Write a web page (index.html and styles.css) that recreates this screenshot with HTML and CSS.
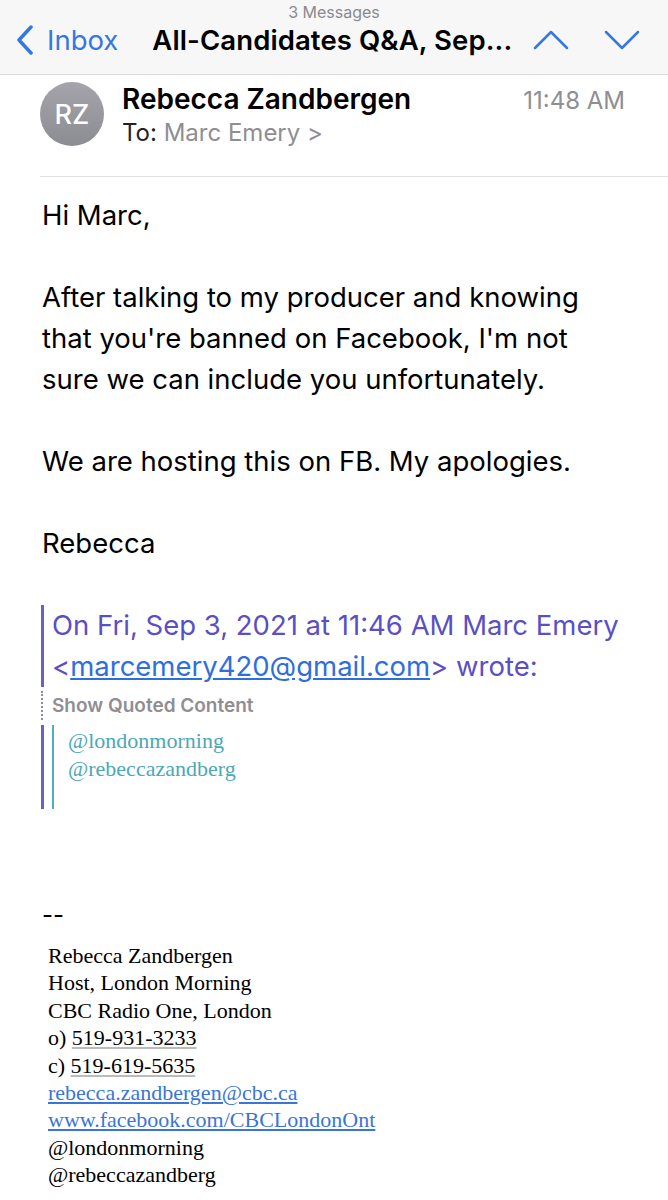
FILE: index.html
```html
<!DOCTYPE html>
<html lang="en">
<head>
    <meta charset="UTF-8">
    <meta name="viewport" content="width=device-width, initial-scale=1.0">
    <title>All-Candidates Q&amp;A</title>
    <link rel="stylesheet" href="styles.css">
</head>
<body>
    <header class="nav">
        <div class="nav-count">3 Messages</div>
        <div class="nav-row">
            <a class="nav-back" href="#">
                <svg viewBox="0 0 20 30" class="chev-back">
                    <path d="M16 2 L4 15 L16 28"/>
                </svg>
                Inbox
            </a>
            <div class="nav-title">All-Candidates Q&amp;A, Sep...</div>
            <div class="nav-arrows">
                <svg viewBox="0 0 36 20" class="chev">
                    <path d="M2 18 L18 2 L34 18"/>
                </svg>
                <svg viewBox="0 0 36 20" class="chev">
                    <path d="M2 2 L18 18 L34 2"/>
                </svg>
            </div>
        </div>
    </header>

    <section class="sender">
        <div class="avatar">RZ</div>
        <div class="sender-meta">
            <div class="sender-top">
                <span class="sender-name">Rebecca Zandbergen</span>
                <span class="sender-time">11:48 AM</span>
            </div>
            <div class="sender-to">To: <span class="to-name">Marc Emery</span> <span class="to-chev">&gt;</span></div>
        </div>
    </section>

    <main class="message">
        <p>Hi Marc,</p>
        <p>After talking to my producer and knowing that you're banned on Facebook, I'm not sure we can include you unfortunately.</p>
        <p>We are hosting this on FB. My apologies.</p>
        <p>Rebecca</p>

        <div class="quote-head">
            On Fri, Sep 3, 2021 at 11:46 AM Marc Emery<br>
            &lt;<a href="#">marcemery420@gmail.com</a>&gt; wrote:
        </div>
        <div class="quote-toggle">Show Quoted Content</div>
        <div class="quote-outer">
            <div class="quote-inner">
                @londonmorning<br>
                @rebeccazandberg
            </div>
        </div>

        <div class="sig-dash">--</div>
        <div class="sig">
            Rebecca Zandbergen<br>
            Host, London Morning<br>
            CBC Radio One, London<br>
            o) <span class="phone">519-931-3233</span><br>
            c) <span class="phone">519-619-5635</span><br>
            <a href="#">rebecca.zandbergen@cbc.ca</a><br>
            <a href="#">www.facebook.com/CBCLondonOnt</a><br>
            @londonmorning<br>
            @rebeccazandberg
        </div>
    </main>
</body>
</html>
```

FILE: styles.css
```css
body {
    margin: 0;
    font-family: Inter, "Liberation Sans", sans-serif;
    background: #fff;
    color: #000;
}
.nav {
    height: 75px;
    background: #f7f7f8;
    border-bottom: 1px solid #dcdcdc;
    box-sizing: border-box;
    padding-top: 2px;
}
.nav-count {
    text-align: center;
    font-size: 16px;
    color: #8a8a8e;
    line-height: 20px;
}
.nav-row {
    display: flex;
    align-items: center;
    height: 36px;
    padding: 0 28px 0 15px;
}
.nav-back {
    display: flex;
    align-items: center;
    gap: 12px;
    color: #3478e0;
    text-decoration: none;
    font-size: 27.5px;
}
.chev-back {
    width: 20px;
    height: 30px;
    fill: none;
    stroke: #3478e0;
    stroke-width: 3.5;
    stroke-linecap: round;
    stroke-linejoin: round;
}
.nav-title {
    margin-left: 34px;
    font-size: 27.5px;
    font-weight: 600;
    letter-spacing: 0.1px;
    white-space: nowrap;
}
.nav-arrows {
    display: flex;
    gap: 35px;
    margin-left: auto;
}
.chev {
    width: 36px;
    height: 20px;
    fill: none;
    stroke: #3478e0;
    stroke-width: 2.5;
    stroke-linecap: round;
    stroke-linejoin: round;
}
.sender {
    display: flex;
    margin-left: 40px;
    padding: 7px 43px 26px 0;
    border-bottom: 1px solid #e2e2e4;
}
.avatar {
    width: 64px;
    height: 64px;
    border-radius: 50%;
    background: linear-gradient(#a4a4aa, #8c8c93);
    color: #fff;
    font-size: 27px;
    font-weight: 500;
    display: flex;
    align-items: center;
    justify-content: center;
    flex-shrink: 0;
}
.sender-meta {
    flex: 1;
    margin-left: 18px;
}
.sender-top {
    display: flex;
    justify-content: space-between;
    align-items: baseline;
}
.sender-name {
    font-size: 28px;
    font-weight: 600;
    line-height: 34px;
}
.sender-time {
    font-size: 24px;
    color: #8e8e93;
}
.sender-to {
    font-size: 24px;
    line-height: 34px;
    color: #222;
}
.to-name, .to-chev {
    color: #8e8e93;
}
.message {
    padding: 18px 40px 40px 42px;
    font-size: 27.5px;
    line-height: 41px;
}
.message p {
    margin: 0 0 41px;
}
.quote-head {
    color: #5a4fc4;
    border-left: 3px solid #6a62c2;
    margin-left: -1px;
    padding-left: 8px;
    white-space: nowrap;
}
.quote-head a {
    color: #2f6fdc;
}
.quote-toggle {
    margin: 4px 0 0 -1px;
    padding: 2px 0 2px 9px;
    border-left: 2px dotted #8a84c8;
    font-size: 19px;
    font-weight: 600;
    line-height: 25px;
    color: #8e8e93;
}
.quote-outer {
    margin: 5px 0 0 -1px;
    border-left: 3px solid #6a62c2;
    padding-left: 8px;
}
.quote-inner {
    border-left: 2px solid #52aebf;
    padding: 2px 0 26px 14px;
    font-family: "Liberation Serif", serif;
    font-size: 22px;
    line-height: 28px;
    color: #4aa8b8;
}
.sig-dash {
    margin-top: 85px;
    font-size: 24px;
}
.sig {
    margin: 7px 0 0 6px;
    font-family: "Liberation Serif", serif;
    font-size: 22px;
    line-height: 27.4px;
}
.sig .phone {
    text-decoration: underline;
    text-decoration-color: #bbb;
}
.sig a {
    color: #3a76d6;
}
```
